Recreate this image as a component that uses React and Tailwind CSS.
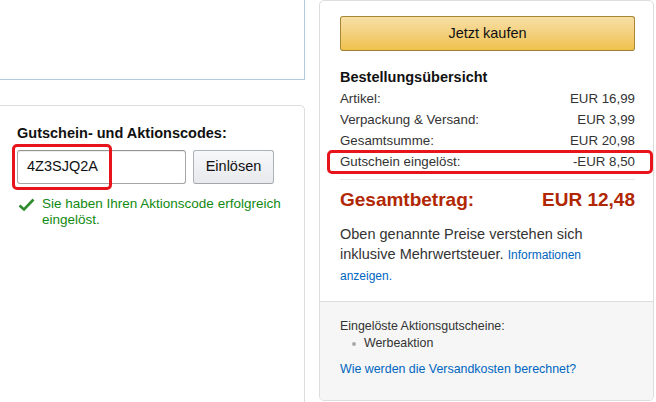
import React from "react";

export default function App() {
  return (
    <div className="w-[656px] h-[402px] bg-white flex overflow-hidden font-['Liberation_Sans',Arial,sans-serif] text-[#111]">
      {/* Left column */}
      <div className="w-[305px] flex flex-col shrink-0">
        <div className="h-[80px] border-r border-b border-[#aecde0] shrink-0" />
        <div className="mt-[25px] flex-1 border-t border-r border-[#dddddd] rounded-tr-[5px] pt-[16px] pl-[17px]">
          <div className="text-[14.5px] font-bold leading-[22px] text-[#111]">Gutschein- und Aktionscodes:</div>
          <div className="flex items-start mt-[6px]">
            <div className="relative">
              <div className="w-[169px] h-[34px] border border-[#a6a6a6] border-t-[#949494] rounded-[3px] shadow-[inset_0_1px_0_rgba(0,0,0,0.07)] flex items-center pl-[9px] text-[14.5px] text-[#111]">
                4Z3SJQ2A
              </div>
              <div className="absolute left-[-5px] top-[-6px] w-[100px] h-[46px] border-[3px] border-[#e8141c] rounded-[5px]" />
            </div>
            <div className="ml-[7px] w-[81px] h-[34px] rounded-[3px] border border-[#adb1b8] border-b-[#a2a6ac] bg-gradient-to-b from-[#f7f8fa] to-[#e7e9ec] flex items-center justify-center text-[14.5px] text-[#111]">
              Einlösen
            </div>
          </div>
          <div className="flex items-start mt-[12px]">
            <svg width="17" height="14" viewBox="0 0 17 14" className="mt-[2px] ml-[1px] shrink-0">
              <path d="M1.5 7.5 L6 11.5 L15.5 1.5" fill="none" stroke="#2e8b2e" strokeWidth="2.6" strokeLinejoin="miter" />
            </svg>
            <div className="ml-[7px] text-[13.5px] leading-[15.5px] text-[#118a11] w-[250px]">
              Sie haben Ihren Aktionscode erfolgreich eingelöst.
            </div>
          </div>
        </div>
      </div>

      {/* Right panel */}
      <div className="ml-[14px] w-[335px] h-[401px] shrink-0 border border-[#dddddd] rounded-[5px] flex flex-col overflow-hidden">
        <div className="pl-[20px] pr-[18px] pt-[15px] pb-[15px]">
          <div className="h-[35px] rounded-[3px] border border-[#a88734] border-b-[#9c7e31] bg-gradient-to-b from-[#f7dfa5] to-[#f0c14b] flex items-center justify-center text-[14.5px] text-[#111]">
            Jetzt kaufen
          </div>
          <div className="mt-[16px] text-[14.5px] font-bold leading-[21px]">Bestellungsübersicht</div>
          <div className="text-[13.3px] leading-[21px] text-[#333]">
            <div className="flex justify-between"><span>Artikel:</span><span>EUR 16,99</span></div>
            <div className="flex justify-between"><span>Verpackung &amp; Versand:</span><span>EUR 3,99</span></div>
            <div className="flex justify-between"><span>Gesamtsumme:</span><span>EUR 20,98</span></div>
            <div className="relative flex justify-between">
              <span>Gutschein eingelöst:</span><span>-EUR 8,50</span>
              <div className="absolute left-[-13px] right-[-18px] top-[-1px] bottom-[-2px] border-[3px] border-[#e8141c] rounded-[5px]" />
            </div>
          </div>
          <div className="mt-[7px] h-px bg-[#e7e7e7]" />
          <div className="mt-[8px] flex justify-between text-[19px] font-bold leading-[24px] text-[#b12704]">
            <span>Gesamtbetrag:</span><span>EUR 12,48</span>
          </div>
          <div className="mt-[12px] text-[14.5px] leading-[20px] text-[#333]">
            Oben genannte Preise verstehen sich inklusive Mehrwertsteuer.{" "}
            <span className="text-[12px] text-[#0066c0]">Informationen anzeigen.</span>
          </div>
        </div>
        <div className="flex-1 border-t border-[#dddddd] bg-[#f6f6f6] pl-[20px] pt-[16px] text-[12.4px] leading-[17px] text-[#333]">
          <div>Eingelöste Aktionsgutscheine:</div>
          <div className="flex items-center">
            <span className="ml-[12px] w-[4px] h-[4px] rounded-full bg-[#aaaaaa]" />
            <span className="ml-[8px]">Werbeaktion</span>
          </div>
          <div className="mt-[9px] text-[#0066c0]">Wie werden die Versandkosten berechnet?</div>
        </div>
      </div>
    </div>
  );
}
